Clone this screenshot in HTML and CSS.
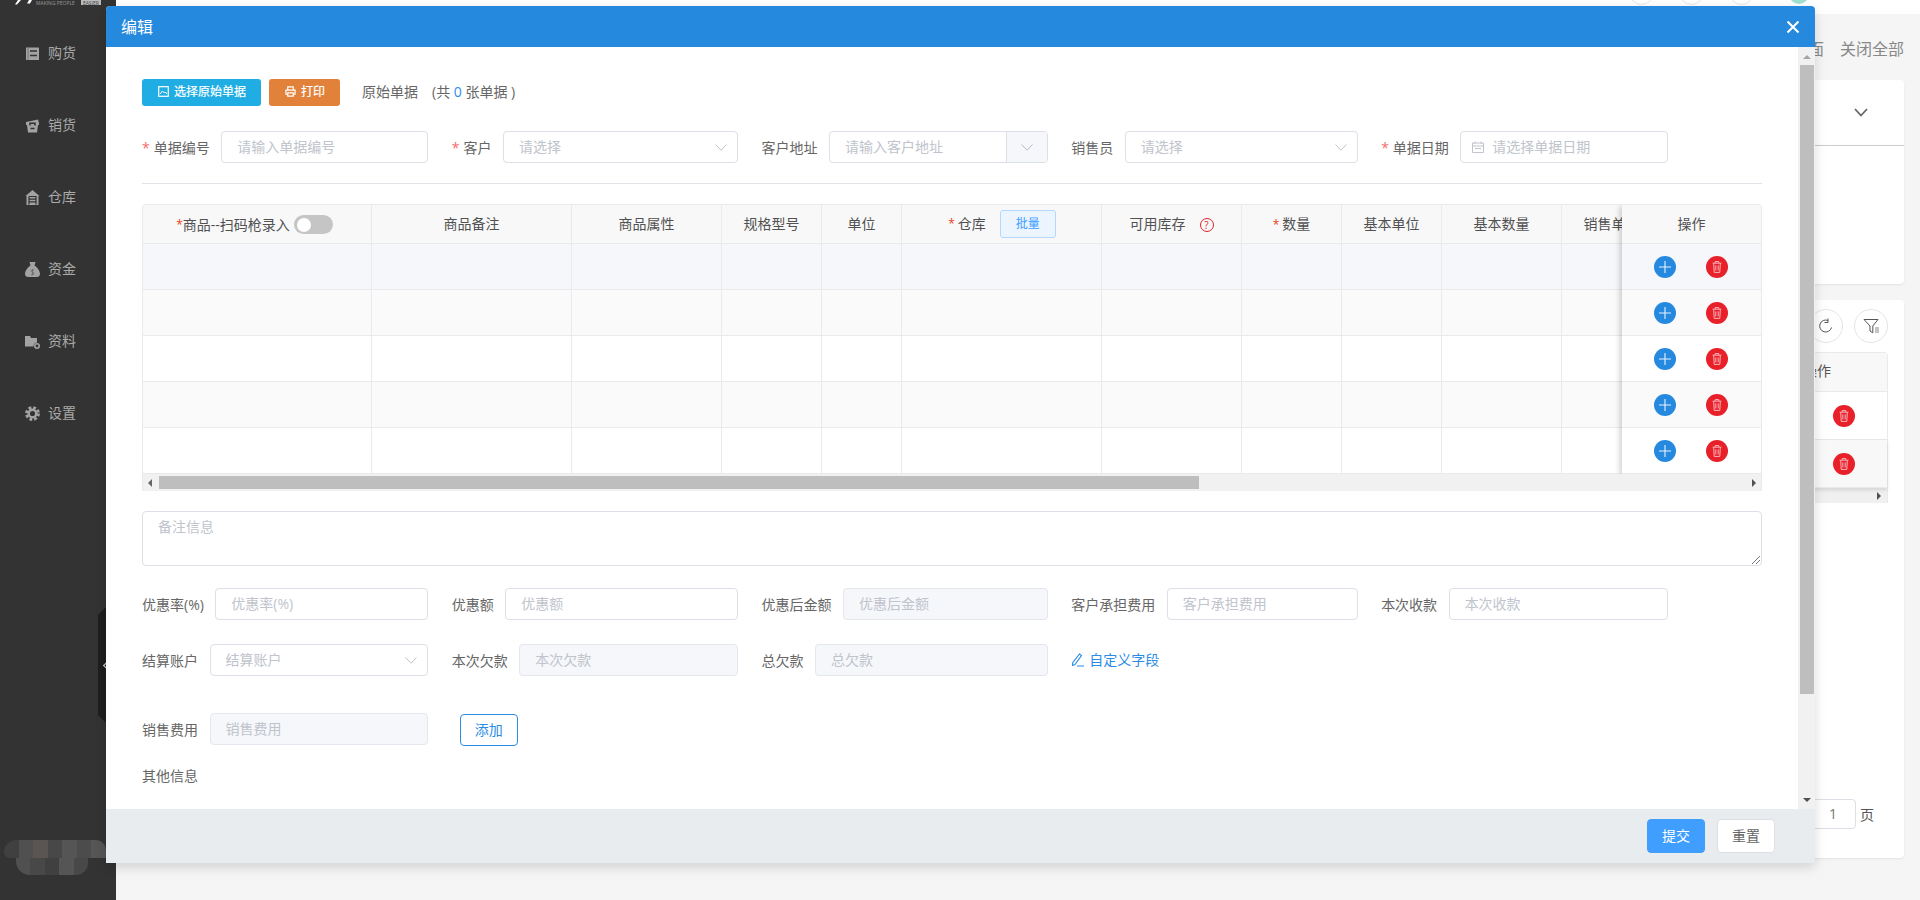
FILE: index.html
```html
<!DOCTYPE html>
<html lang="zh-CN">
<head>
<meta charset="utf-8">
<title>编辑</title>
<link rel="stylesheet" href="styles.css">
</head>
<body>
<svg class="defs" width="0" height="0" aria-hidden="true">
  <symbol id="i-chev" viewBox="0 0 12 7"><path d="M.5.5 6 6.2 11.5.5" fill="none" stroke="currentColor"/></symbol>
  <symbol id="i-plus" viewBox="0 0 22 22"><circle cx="11" cy="11" r="11" fill="#2589e0"/><path d="M5 11h12M11 5v12" stroke="#e8f2fc" stroke-width="1.1"/></symbol>
  <symbol id="i-trash" viewBox="0 0 22 22"><circle cx="11" cy="11" r="11" fill="#e8202a"/><path d="M6.6 7.2h8.8M9.2 7V5.600h3.600V7M7.700 7.400l.5 9h5.600l.5-9M9.800 9.400v5M12.200 9.400v5" fill="none" stroke="#f9b4b8" stroke-width="1"/></symbol>
</svg>

<aside class="sidebar">
  <div class="logo">
    <svg class="logo-mark" viewBox="0 0 20 5"><path d="M4 0h3L3 4.500H1zM15 0h3l-2 3.500h-3z" fill="#fff"/></svg>
    <span class="logo-text">MAKING PEOPLE</span>
    <span class="logo-tag">EASIER</span>
  </div>
  <nav class="nav">
    <a class="nav-item"><svg class="nav-icon" viewBox="0 0 15 15"><path d="M1 1.500h13v12.500H1z" fill="#a3a3a3"/><path d="M3 1.500v12.500" stroke="#777" stroke-width="1"/><path d="M5 5h7M5 9.500h7" stroke="#333" stroke-width="1.600"/></svg>购货</a>
    <a class="nav-item"><svg class="nav-icon" viewBox="0 0 15 15"><path d="M1 4 13 1.500 14 5v2h-1l-1 7.500H3L2 7H1z" fill="#a3a3a3"/><path d="M5 7.500V5.200h5v2.300M5.500 10.500h4" fill="none" stroke="#333" stroke-width="1.500"/></svg>销货</a>
    <a class="nav-item"><svg class="nav-icon" viewBox="0 0 15 15"><path d="M7.500 0 14.500 6H13.500V15h-12V6H.5z" fill="#a3a3a3"/><path d="M4 6.500h7v8M4 6.500v8M4 9.200h7M4 11.800h7" fill="none" stroke="#333" stroke-width="1.200"/></svg>仓库</a>
    <a class="nav-item"><svg class="nav-icon" viewBox="0 0 15 15"><path d="M4.500 0h6L9.500 3.500C12.500 5.500 15 9 15 12c0 2-1.500 3-3 3H3c-1.500 0-3-1-3-3 0-3 2.500-6.500 5.500-8.500z" fill="#a3a3a3"/><path d="M9 8.200C8 7.500 6 7.700 6 9s3 1 3 2.500-2 1.600-3.200.8M7.500 7v6" fill="none" stroke="#666" stroke-width=".8"/></svg>资金</a>
    <a class="nav-item"><svg class="nav-icon" viewBox="0 0 15 15"><path d="M0 2h5l1 2h6v4.500a4 4 0 0 0-3.500 4H0z" fill="#a3a3a3"/><circle cx="12" cy="12" r="2.200" fill="none" stroke="#a3a3a3" stroke-width="1.600"/></svg>资料</a>
    <a class="nav-item"><svg class="nav-icon" viewBox="0 0 15 15"><circle cx="7.500" cy="7.500" r="6" fill="none" stroke="#a3a3a3" stroke-width="2.800" stroke-dasharray="2.800 1.910"/><circle cx="7.500" cy="7.500" r="3.800" fill="none" stroke="#a3a3a3" stroke-width="2.500"/></svg>设置</a>
  </nav>
  <div class="blob">
    <div class="blob-top"><i class="m1"></i><i class="m2"></i><i class="m3"></i><i class="m4"></i><i class="m5"></i><i class="m6"></i><i class="m7"></i></div>
    <div class="blob-bottom"><i class="m2"></i><i class="m4"></i><i class="m1"></i><i class="m5"></i><i class="m4"></i></div>
  </div>
</aside>
<div class="handle"><span class="handle-arrow"></span></div>

<main class="main">
  <header class="topbar">
    <span class="top-circle"></span><span class="top-circle"></span><span class="top-circle"></span><span class="top-avatar"></span>
  </header>
  <div class="tabs"><span>关闭当前页面</span><span>关闭全部</span></div>
  <section class="card card-a">
    <div class="card-head"><svg class="card-chev" viewBox="0 0 14 9"><path d="M1 1l6 6.500L13 1" fill="none" stroke="#666" stroke-width="1.800"/></svg></div>
  </section>
  <section class="card card-b">
    <div class="tools">
      <span class="tool"><svg width="16" height="16" viewBox="0 0 16 16"><path d="M13.500 9.500A6 6 0 1 1 10 2.500M10 .5v4h-3.500" fill="none" stroke="#555" stroke-width="1"/></svg></span>
      <span class="tool"><svg width="17" height="17" viewBox="0 0 17 17"><path d="M1 1.500h14L9.800 8v6.800L7 13V8z" fill="none" stroke="#555" stroke-width="1"/><path d="M12 10h4M12 12h4M12 14h4" stroke="#888"/></svg></span>
    </div>
    <div class="mini-table">
      <div class="mini-head">操作</div>
      <div class="mini-row"><svg class="round-ico"><use href="#i-trash"/></svg></div>
      <div class="mini-row mini-alt"><svg class="round-ico"><use href="#i-trash"/></svg></div>
      <div class="mini-scroll"><span class="arrow-r"></span></div>
    </div>
    <div class="pager"><span class="pager-input">1</span><span>页</span></div>
  </section>
</main>

<div class="modal">
  <div class="modal-head">
    <span class="modal-title">编辑</span>
    <svg class="modal-close" viewBox="0 0 14 14"><path d="M1.500 1.500l11 11M12.500 1.500l-11 11" stroke="#fff" stroke-width="2"/></svg>
  </div>
  <div class="modal-body">
    <div class="content">
      <div class="toolbar">
        <button class="btn btn-cyan"><svg class="btn-ico" viewBox="0 0 11 11"><rect x=".7" y=".7" width="9.600" height="9.600" fill="none" stroke="#fff" stroke-width="1.200"/><path d="M2 8l2.500-3 1.800 2 1-1L9 8" fill="none" stroke="#fff"/></svg>选择原始单据</button>
        <button class="btn btn-orange"><svg class="btn-ico" viewBox="0 0 12 12"><path d="M3 4V1h6v3M3 9H1V4.500h10V9H9M3 7.500h6V11H3z" fill="none" stroke="#fff" stroke-width="1.300"/></svg>打印</button>
        <span class="origin">原始单据</span>
        <span class="origin-count">(共 <b class="blue-num">0</b> 张单据 )</span>
      </div>

      <div class="form-row">
        <div class="field"><label class="lbl req">单据编号</label><div class="input">请输入单据编号</div></div>
        <div class="field"><label class="lbl req">客户</label><div class="input select">请选择<svg class="chev"><use href="#i-chev"/></svg></div></div>
        <div class="field"><label class="lbl">客户地址</label><div class="input with-addon"><span class="addon-text">请输入客户地址</span><span class="addon"><svg class="chev-in"><use href="#i-chev"/></svg></span></div></div>
        <div class="field"><label class="lbl">销售员</label><div class="input select">请选择<svg class="chev"><use href="#i-chev"/></svg></div></div>
        <div class="field"><label class="lbl req">单据日期</label><div class="input date"><svg class="cal" viewBox="0 0 12 12"><path d="M.5 2h11v9.500H.5zM.5 5h11M3 .5V3M9 .5V3M3 7.500h6" fill="none" stroke="#c0c4cc"/></svg>请选择单据日期</div></div>
      </div>

      <hr class="divider">

      <div class="grid-wrap">
        <div class="grid-view">
          <table class="grid">
            <colgroup><col class="w229"><col class="w200"><col class="w150"><col class="w100"><col class="w80"><col class="w200"><col class="w140"><col class="w100"><col class="w100"><col class="w120"><col class="w100"><col class="w100"></colgroup>
            <thead>
              <tr>
                <th><span class="th-goods"><em class="star-tight">*</em>商品--扫码枪录入<span class="switch"><i></i></span></span></th>
                <th>商品备注</th><th>商品属性</th><th>规格型号</th><th>单位</th>
                <th><span class="th-store"><em class="star">*</em>仓库<span class="batch">批量</span></span></th>
                <th><span class="th-stock">可用库存<span class="help">?</span></span></th>
                <th><em class="star">*</em>数量</th><th>基本单位</th><th>基本数量</th><th>销售单价</th><th></th>
              </tr>
            </thead>
            <tbody>
              <tr class="r-hover"><td></td><td></td><td></td><td></td><td></td><td></td><td></td><td></td><td></td><td></td><td></td><td></td></tr>
              <tr class="r-alt"><td></td><td></td><td></td><td></td><td></td><td></td><td></td><td></td><td></td><td></td><td></td><td></td></tr>
              <tr><td></td><td></td><td></td><td></td><td></td><td></td><td></td><td></td><td></td><td></td><td></td><td></td></tr>
              <tr class="r-alt"><td></td><td></td><td></td><td></td><td></td><td></td><td></td><td></td><td></td><td></td><td></td><td></td></tr>
              <tr><td></td><td></td><td></td><td></td><td></td><td></td><td></td><td></td><td></td><td></td><td></td><td></td></tr>
            </tbody>
          </table>
          <div class="fixed-col">
            <div class="fx-head">操作</div>
            <div class="fx-row r-hover"><svg class="round-ico"><use href="#i-plus"/></svg><svg class="round-ico"><use href="#i-trash"/></svg></div>
            <div class="fx-row r-alt"><svg class="round-ico"><use href="#i-plus"/></svg><svg class="round-ico"><use href="#i-trash"/></svg></div>
            <div class="fx-row"><svg class="round-ico"><use href="#i-plus"/></svg><svg class="round-ico"><use href="#i-trash"/></svg></div>
            <div class="fx-row r-alt"><svg class="round-ico"><use href="#i-plus"/></svg><svg class="round-ico"><use href="#i-trash"/></svg></div>
            <div class="fx-row"><svg class="round-ico"><use href="#i-plus"/></svg><svg class="round-ico"><use href="#i-trash"/></svg></div>
          </div>
        </div>
        <div class="hbar"><span class="arrow-l"></span><span class="hthumb"></span><span class="arrow-r"></span></div>
      </div>

      <div class="textarea">备注信息<svg class="resize" viewBox="0 0 8 8"><path d="M8 0 0 8M8 4 4 8" stroke="#777"/></svg></div>

      <div class="form-row row-discount">
        <div class="field"><label class="lbl">优惠率(%)</label><div class="input">优惠率(%)</div></div>
        <div class="field"><label class="lbl">优惠额</label><div class="input">优惠额</div></div>
        <div class="field"><label class="lbl">优惠后金额</label><div class="input off">优惠后金额</div></div>
        <div class="field"><label class="lbl">客户承担费用</label><div class="input">客户承担费用</div></div>
        <div class="field"><label class="lbl">本次收款</label><div class="input">本次收款</div></div>
      </div>
      <div class="form-row row-account">
        <div class="field"><label class="lbl">结算账户</label><div class="input select">结算账户<svg class="chev"><use href="#i-chev"/></svg></div></div>
        <div class="field"><label class="lbl">本次欠款</label><div class="input off">本次欠款</div></div>
        <div class="field"><label class="lbl">总欠款</label><div class="input off">总欠款</div></div>
        <div class="field"><a class="custom"><svg class="pen" viewBox="0 0 13 14"><path d="M8.500 1l2 1.500L4 11.500l-2.500 1 .2-2.800zM6 13h7" fill="none" stroke="#2b8ce6" stroke-width="1.100"/></svg>自定义字段</a></div>
      </div>
      <div class="form-row row-fee">
        <div class="field"><label class="lbl">销售费用</label><div class="input off">销售费用</div></div>
        <div class="field"><button class="btn-add">添加</button></div>
      </div>
      <div class="other">其他信息</div>
    </div>
    <div class="vbar"><span class="up"></span><span class="vthumb"></span><span class="down"></span></div>
  </div>
  <div class="modal-foot">
    <button class="foot-btn foot-primary">提交</button>
    <button class="foot-btn">重置</button>
  </div>
</div>
</body>
</html>
```

FILE: styles.css
```css
* { box-sizing: border-box; }
html, body { margin: 0; height: 900px; overflow: hidden; }
body {
  display: flex;
  background: #f5f5f5;
  font-family: "Open Sans", "Noto Sans CJK SC", sans-serif;
  font-size: 14px;
  color: #606266;
}
.defs { position: absolute; }
button { font-family: inherit; cursor: pointer; }
em { font-style: normal; }

/* sidebar */
.sidebar { width: 116px; height: 900px; background: #333; display: flex; flex-direction: column; color: #aaa; flex: none; }
.logo { height: 17px; padding-left: 14px; display: flex; align-items: flex-start; gap: 2px; overflow: hidden; }
.logo-mark { width: 20px; height: 5px; flex: none; }
.logo-text { font-size: 5px; line-height: 6px; color: #999; white-space: nowrap; }
.logo-tag { font-size: 5px; line-height: 6px; background: #bbb; color: #444; padding: 0 2px; margin-left: 4px; height: 5px; }
.nav-item { height: 72px; display: flex; align-items: center; padding-left: 25px; gap: 8px; color: #aaa; line-height: 1; }
.nav-icon { width: 15px; height: 15px; flex: none; }
.blob { margin-top: auto; margin-bottom: 25px; margin-left: 4px; width: 102px; height: 35px; display: flex; flex-direction: column; }
.blob-top { height: 18px; display: flex; border-radius: 12px 10px 0 6px; overflow: hidden; }
.blob-bottom { height: 17px; margin: 0 18px 0 12px; display: flex; border-radius: 0 0 12px 14px; overflow: hidden; }
.blob i { flex: 1; background: #4b4b4b; }
.blob .m1 { background: #404040; }
.blob .m2 { background: #505050; }
.blob .m3 { background: #5a5553; }
.blob .m4 { background: #484848; }
.blob .m5 { background: #555; }
.blob .m6 { background: #4c4c4c; }
.blob .m7 { background: #565656; }
.handle {
  position: absolute; left: 98px; top: 607px; width: 8px; height: 116px;
  background: #1e1e1e;
  clip-path: polygon(100% 0, 0 8px, 0 108px, 100% 100%);
}
.handle-arrow { position: absolute; left: 6px; top: 56px; width: 5px; height: 5px; border-left: 1px solid #ddd; border-bottom: 1px solid #ddd; transform: rotate(45deg); }

/* page behind the modal */
.main { flex: 1; height: 900px; display: flex; flex-direction: column; padding-bottom: 42px; min-width: 0; }
.topbar { height: 14px; background: #fff; display: flex; justify-content: flex-end; padding-right: 111px; overflow: hidden; flex: none; }
.top-circle { width: 25px; height: 25px; margin: -20px 25px 0 0; border: 1px solid #e6e6e6; border-radius: 50%; flex: none; }
.top-avatar { width: 20px; height: 20px; margin: -16px 0 0 10px; border-radius: 50%; background: #9fe0d0; flex: none; }
.tabs { height: 66px; display: flex; align-items: center; justify-content: flex-end; gap: 16px; padding: 2px 16px 0 0; font-size: 16px; color: #888; flex: none; }
.card { margin: 0 16px; background: #fff; border-radius: 4px; box-shadow: 0 1px 2px rgba(0,0,0,.08); }
.card-a { height: 204px; flex: none; }
.card-head { height: 66px; border-bottom: 1px solid #ccc; display: flex; align-items: center; justify-content: flex-end; padding-right: 36px; }
.card-chev { width: 14px; height: 9px; }
.card-b { margin-top: 16px; flex: 1; display: flex; flex-direction: column; padding: 9px 16px 29px; }
.tools { display: flex; justify-content: flex-end; gap: 11px; }
.tool { width: 34px; height: 34px; border: 1px solid #e3e5ea; border-radius: 50%; display: flex; align-items: center; justify-content: center; }
.mini-table { margin-top: 9px; border: 1px solid #e8eaec; border-bottom: 0; border-radius: 4px 4px 0 0; }
.mini-head { height: 39px; background: #f8f8f9; border-bottom: 1px solid #e8eaec; text-align: right; padding: 8px 56px 0 0; color: #555; line-height: 20px; }
.mini-row { height: 48px; border-bottom: 1px solid #e8eaec; display: flex; justify-content: flex-end; align-items: center; padding-right: 32px; }
.mini-alt { background: #f8f8f9; box-shadow: 0 2px 4px rgba(0,0,0,.12); position: relative; }
.mini-scroll { height: 15px; background: #f0f0f0; display: flex; justify-content: flex-end; align-items: center; padding-right: 6px; }
.pager { margin-top: auto; display: flex; justify-content: flex-end; align-items: center; gap: 4px; padding-right: 14px; color: #555; }
.pager-input { width: 46px; height: 30px; border: 1px solid #dcdfe6; border-radius: 4px; background: #fff; text-align: center; line-height: 28px; color: #777; }

/* modal */
.modal {
  position: absolute; left: 106px; top: 6px; width: 1709px; height: 857px;
  display: flex; flex-direction: column;
  background: #fff; border-radius: 4px 4px 0 0;
  box-shadow: 0 4px 12px rgba(0,0,0,.15);
}
.modal-head { height: 41px; background: #2589de; border-radius: 4px 4px 0 0; display: flex; align-items: center; justify-content: space-between; padding: 0 15px; flex: none; }
.modal-title { font-size: 16px; line-height: 20px; color: #fff; }
.modal-close { width: 14px; height: 14px; }
.modal-body { flex: 1; display: flex; min-height: 0; }
.content { flex: 1; min-width: 0; padding: 32px 36px 0; overflow: hidden; }

.toolbar { height: 27px; display: flex; align-items: center; }
.btn { height: 27px; border: 0; border-radius: 3px; color: #fff; font-size: 12px; line-height: 16px; display: flex; align-items: center; padding: 0 15px 2px 16px; gap: 5px; -webkit-text-stroke: .2px #fff; }
.btn-cyan { background: #20ade3; width: 119px; }
.btn-orange { background: #e2813a; width: 71px; margin-left: 8px; }
.btn-ico { width: 11px; height: 11px; flex: none; }
.origin { margin-left: 22px; color: #666; line-height: 16px; padding-bottom: 2px; }
.origin-count { margin-left: 14px; color: #666; line-height: 16px; padding-bottom: 2px; }
.blue-num { font-weight: 400; color: #2d8cf0; }

.form-row { display: grid; grid-template-columns: repeat(4, 286.4px) 286.800px; column-gap: 23.400px; margin-top: 25px; }
.field { display: flex; align-items: center; height: 32px; }
.lbl { margin: 2px 11.500px 0 0; white-space: nowrap; color: #666; flex: none; line-height: 20px; }
.req::before { content: "*"; color: #f56c6c; margin-right: 4px; }
.input { flex: 1; min-width: 0; height: 32px; border: 1px solid #dcdfe6; border-radius: 4px; padding: 0 15px; line-height: 30px; color: #c0c4cc; background: #fff; position: relative; white-space: nowrap; }
.select .chev { position: absolute; right: 10px; top: 12px; width: 12px; height: 7px; color: #c0c4cc; }
.with-addon { display: flex; padding: 0; }
.addon-text { flex: 1; padding-left: 15px; }
.addon { width: 41px; background: #f5f7fa; border-left: 1px solid #dcdfe6; border-radius: 0 3px 3px 0; display: flex; align-items: center; justify-content: center; }
.chev-in { width: 12px; height: 7px; color: #b5b9c2; }
.date { display: flex; align-items: center; padding-left: 11px; gap: 8px; }
.cal { width: 12px; height: 12px; flex: none; }
.off { background: #f5f7fa; border-color: #e4e7ed; }

.divider { border: 0; border-top: 1px solid #e2e3e8; margin: 20px 0 20px; height: 1px; }

/* product grid */
.grid-wrap { border: 1px solid #e8eaec; border-bottom: 0; border-radius: 4px 4px 0 0; height: 287px; overflow: hidden; }
.grid-view { position: relative; height: 269px; overflow: hidden; }
.grid { border-collapse: separate; border-spacing: 0; table-layout: fixed; width: 1619px; }
.w229 { width: 229px; } .w200 { width: 200px; } .w150 { width: 150px; } .w140 { width: 140px; } .w120 { width: 120px; } .w100 { width: 100px; } .w80 { width: 80px; }
.grid th { height: 39px; background: #f8f8f9; font-weight: 400; color: #515151; border-right: 1px solid #e8eaec; border-bottom: 1px solid #e8eaec; padding: 0; white-space: nowrap; overflow: hidden; line-height: 20px; }
.grid td { height: 46px; border-right: 1px solid #e8eaec; border-bottom: 1px solid #e8eaec; padding: 0; }
.r-hover { background: #f5f7fb; }
.r-alt { background: #fafafa; }
.th-goods { display: inline-flex; align-items: center; justify-content: center; margin-right: 5px; }
.star-tight { color: #ed4014; margin-right: 0; font-size: 12px; }
.star { color: #ed4014; margin-right: 3px; font-size: 12px; }
.switch { width: 39px; height: 19px; border-radius: 10px; background: #c5c5c5; margin-left: 4px; display: inline-flex; align-items: center; padding-left: 3px; }
.switch i { width: 14px; height: 14px; border-radius: 50%; background: #fff; }
.th-store { display: inline-flex; align-items: center; margin-left: 1px; }
.batch { width: 56px; height: 28px; margin-left: 14px; border: 1px solid #b3d8ff; border-radius: 3px; background: #ecf5ff; color: #409eff; font-size: 12px; line-height: 26px; }
.th-stock { display: inline-flex; align-items: center; }
.help { width: 14px; height: 14px; margin: 2px 0 0 14px; border: 1px solid #e0202a; border-radius: 50%; color: #e0202a; font-size: 10px; line-height: 12px; text-align: center; }
.fixed-col { position: absolute; right: 0; top: 0; width: 139px; background: #fff; box-shadow: -2px 1px 6px rgba(0,0,0,.2); }
.fx-head { height: 39px; background: #f8f8f9; border-bottom: 1px solid #e8eaec; text-align: center; line-height: 38px; color: #515151; }
.fixed-col .fx-row { height: 46px; border-bottom: 1px solid #e8eaec; display: flex; align-items: center; padding-left: 32px; gap: 30px; }
.round-ico { width: 22px; height: 22px; flex: none; }
.hbar { height: 17px; background: #f1f1f1; display: flex; align-items: center; position: relative; }
.arrow-l { width: 0; height: 0; border: 4px solid transparent; border-left: 0; border-right: 4px solid #666; margin-left: 5px; }
.arrow-r { width: 0; height: 0; border: 4px solid transparent; border-right: 0; border-left: 4px solid #505050; }
.hbar .arrow-r { margin-left: auto; margin-right: 5px; }
.hthumb { width: 1040px; height: 13px; background: #bebebe; margin-left: 7px; }

.textarea { margin-top: 20px; height: 55px; border: 1px solid #dcdfe6; border-radius: 4px; padding: 4px 15px; line-height: 22px; color: #c0c4cc; position: relative; }
.resize { position: absolute; right: 1px; bottom: 1px; width: 8px; height: 8px; }
.row-discount { margin-top: 22px; }
.row-account { margin-top: 24px; }
.row-fee { margin-top: 37px; }
.custom { display: flex; align-items: center; gap: 5px; color: #2b8ce6; line-height: 20px; padding-bottom: 1px; }
.pen { width: 13px; height: 14px; flex: none; }
.btn-add { width: 58px; height: 32px; margin: 2px 0 0 8px; border: 1px solid #2b8ce6; border-radius: 4px; background: #fff; color: #2b8ce6; font-size: 14px; padding: 0; line-height: 20px; }
.other { margin-top: 21px; color: #666; line-height: 20px; }

.vbar { width: 17px; height: 100%; background: #f1f1f1; display: flex; flex-direction: column; align-items: center; position: relative; flex: none; }
.up { width: 0; height: 0; margin-top: 8px; border: 4px solid transparent; border-top: 0; border-bottom: 4px solid #a5a5a5; }
.vthumb { width: 14px; height: 629px; margin-top: 6px; background: #bebebe; }
.down { width: 0; height: 0; margin-top: auto; margin-bottom: 7px; border: 4px solid transparent; border-bottom: 0; border-top: 4px solid #505050; }

.modal-foot { height: 54px; background: #e9ecef; display: flex; justify-content: flex-end; gap: 12px; padding: 10px 40px 0 0; flex: none; }
.foot-btn { width: 58px; height: 34px; border: 1px solid #dcdfe6; border-radius: 4px; background: #fff; color: #666; font-size: 14px; padding: 0; line-height: 20px; }
.foot-primary { background: #409eff; border-color: #409eff; color: #fff; }
```
